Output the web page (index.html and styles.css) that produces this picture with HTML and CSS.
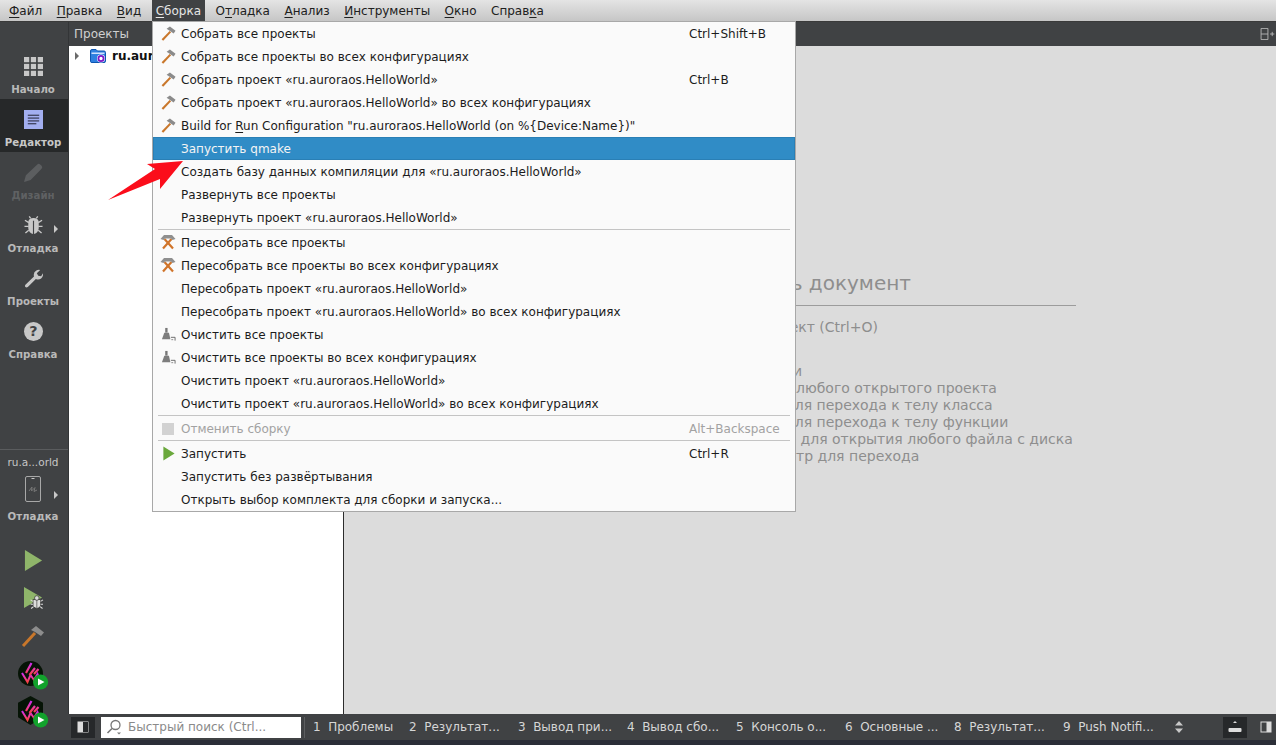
FILE: index.html
```html
<!DOCTYPE html>
<html lang="ru">
<head>
<meta charset="utf-8">
<title>Qt Creator</title>
<link rel="stylesheet" href="styles.css">
</head>
<body>
<svg class="defs" width="0" height="0" aria-hidden="true">
  <defs>
    <linearGradient id="wgrad" x1="0" y1="0" x2="0" y2="1">
      <stop offset="0" stop-color="#c92cf0"/>
      <stop offset="0.55" stop-color="#ee3a9a"/>
      <stop offset="1" stop-color="#f5413f"/>
    </linearGradient>
    <symbol id="hammer" viewBox="0 0 16 16">
      <path d="M1.5 15 L10 6" stroke="#c9772b" stroke-width="2.3" fill="none"/>
      <path d="M6 3 L9.5 0.5 L15.5 5 L13.5 8 L10 5.5 Z" fill="#8b8b8b"/>
    </symbol>
    <symbol id="rebuild" viewBox="0 0 16 16">
      <path d="M3 14.5 L11.5 5 M13 14.5 L4.5 5" stroke="#d0742a" stroke-width="2.2" fill="none"/>
      <path d="M0.5 5 L4 1 H12 L15.5 5 L12.5 6 L11 4.5 H5 L3.5 6 Z" fill="#8f8f8f"/>
    </symbol>
    <symbol id="broom" viewBox="0 0 16 16">
      <path d="M4.5 1 H7 V6 H4.5 Z" fill="#777"/>
      <path d="M3.5 6 H8.5 L10 13 H1 Z" fill="#7d7d7d"/>
      <path d="M10.5 11 H15 V14.5" stroke="#666" stroke-width="1" fill="none"/>
      <path d="M11 13.5 H13" stroke="#888" stroke-width="1" fill="none"/>
    </symbol>
    <symbol id="logo" viewBox="0 0 32 32">
      <path d="M4 12 L9.5 21 L12.5 14 L16 19 L19.5 13 L21 17" stroke="url(#wgrad)" stroke-width="2" fill="none"/>
      <path d="M8 12 L13.5 2 M11.5 14 L17 7 M16 13 L20.5 8" stroke="url(#wgrad)" stroke-width="2.2" fill="none"/>
      <circle cx="22.6" cy="21" r="7.6" fill="#12a22c"/>
      <path d="M20 17.5 L26.5 21 L20 24.5 Z" fill="#fff"/>
    </symbol>
  </defs>
</svg>

<nav class="menubar">
  <span class="mb-item"><u>Ф</u>айл</span>
  <span class="mb-item"><u>П</u>равка</span>
  <span class="mb-item"><u>В</u>ид</span>
  <span class="mb-item mb-active"><u>С</u>борка</span>
  <span class="mb-item">О<u>т</u>ладка</span>
  <span class="mb-item"><u>А</u>нализ</span>
  <span class="mb-item"><u>И</u>нструменты</span>
  <span class="mb-item"><u>О</u>кно</span>
  <span class="mb-item">Справ<u>к</u>а</span>
</nav>

<div class="main">
  <aside class="sidebar">
    <div class="side-top"></div>
    <div class="mode">
      <svg class="mode-icon" viewBox="0 0 20 20"><g fill="#c8c8c8"><rect x="0" y="0" width="5.5" height="5.5"/><rect x="7.2" y="0" width="5.5" height="5.5"/><rect x="14.5" y="0" width="5.5" height="5.5"/><rect x="0" y="7.2" width="5.5" height="5.5"/><rect x="7.2" y="7.2" width="5.5" height="5.5"/><rect x="14.5" y="7.2" width="5.5" height="5.5"/><rect x="0" y="14.5" width="5.5" height="5.5"/><rect x="7.2" y="14.5" width="5.5" height="5.5"/><rect x="14.5" y="14.5" width="5.5" height="5.5"/></g></svg>
      <span class="mode-label">Начало</span>
    </div>
    <div class="mode mode-active">
      <svg class="mode-icon" viewBox="0 0 20 20"><rect width="20" height="20" fill="#a3aff0"/><path d="M4 5.5H16M4 8.5H16M4 11.5H16M4 14.5H13" stroke="#1a1a2a" stroke-width="1"/></svg>
      <span class="mode-label mode-label-on">Редактор</span>
    </div>
    <div class="mode">
      <svg class="mode-icon" viewBox="0 0 20 20"><path d="M0 20 L2 13 L14 1.5 Q15.5 0 17 1.5 L18.5 3 Q20 4.5 18.5 6 L7 18 Z" fill="#5c5e60"/></svg>
      <span class="mode-label mode-label-off">Дизайн</span>
    </div>
    <div class="mode">
      <svg class="mode-icon" viewBox="0 0 20 20"><path d="M10 2 Q5 2 4.5 6 V13 Q5 18 9.4 19 V5 H10.6 V19 Q15 18 15.5 13 V6 Q15 2 10 2 Z" fill="#c8c8c8"/><path d="M5 7 L1 4.5 M5 11 H0.5 M5 15 L1.5 18 M15 7 L19 4.5 M15 11 H19.5 M15 15 L18.5 18 M7 2.5 L5.5 0.5 M13 2.5 L14.5 0.5" stroke="#c8c8c8" stroke-width="1.4" fill="none"/></svg>
      <span class="mode-label">Отладка</span>
      <span class="side-arrow"></span>
    </div>
    <div class="mode">
      <svg class="mode-icon" viewBox="0 0 20 20"><path d="M1.5 16.5 L10.5 8 Q9.5 3.5 13 1.5 Q15 0.5 17 1 L13.5 4.5 L15 7 L18 7.5 L20 4.5 Q20.5 8 18 10 Q15.5 12 12.5 10.5 L4 19 Q2.5 20 1.5 19 Q0.5 18 1.5 16.5 Z" fill="#c8c8c8"/></svg>
      <span class="mode-label">Проекты</span>
    </div>
    <div class="mode">
      <svg class="mode-icon" viewBox="0 0 20 20"><circle cx="10" cy="10" r="10" fill="#c8c8c8"/><text x="10" y="15" class="help-mark">?</text></svg>
      <span class="mode-label">Справка</span>
    </div>
    <div class="side-spacer"></div>
    <div class="target">
      <div class="target-name">ru.a...orld</div>
      <svg class="phone" viewBox="0 0 16 26"><rect x="0.5" y="0.5" width="15" height="25" rx="1.5" fill="none" stroke="#a8a8a8"/><path d="M6.5 2.5H9.5" stroke="#c8c8c8"/><path d="M4 15 L7 11 L6.5 15 L10 11.5 L9 15.5 L12 14" stroke="#777" fill="none"/></svg>
      <span class="side-arrow side-arrow-target"></span>
      <div class="mode-label target-label">Отладка</div>
    </div>
    <div class="actions">
      <svg class="act" viewBox="0 0 20 22"><path d="M1 0 L19 11 L1 22 Z" fill="#8fb56a"/></svg>
      <svg class="act act-debug" viewBox="0 0 20 24"><path d="M0 0 L19 11 L0 22 Z" fill="#8fb56a"/><path d="M9.5 13 H17.5 V20 Q13.5 25 9.5 20 Z" fill="#dcdcdc" stroke="#2f2f2f" stroke-width="0.8"/><path d="M13.5 13 V23" stroke="#555" stroke-width="0.8"/><circle cx="13.5" cy="11.5" r="2.4" fill="#dcdcdc" stroke="#2f2f2f" stroke-width="0.7"/><path d="M9.5 15 L7 13.5 M9.5 18 H7 M10 20.5 L7.5 22.5 M17.5 15 L20 13.5 M17.5 18 H20 M17 20.5 L19.5 22.5" stroke="#dcdcdc" stroke-width="1.1"/></svg>
      <svg class="act act-hammer" viewBox="0 0 24 24"><path d="M2 22 L14 9" stroke="#c9772b" stroke-width="3" fill="none"/><path d="M10 6 L15 2 L23 8.5 L20 12 L14 8 Z" fill="#8d8d8d"/></svg>
      <div class="logo-wrap"><span class="logo-bg logo-round"></span><svg class="logo" viewBox="0 0 32 32"><use href="#logo"/></svg></div>
      <div class="logo-wrap logo-wrap-hex"><svg class="logo-hex" viewBox="0 0 26 30"><path d="M13 0 L26 7 V22 L13 30 L0 22 V7 Z" fill="#061406"/></svg><svg class="logo" viewBox="0 0 32 32"><use href="#logo"/></svg></div>
    </div>
  </aside>

  <section class="projects">
    <header class="panel-head">Проекты</header>
    <div class="tree">
      <span class="tree-arrow"></span>
      <svg class="folder" viewBox="0 0 16 14"><path d="M0.5 2 Q0.5 0.5 2 0.5 H6 L7.5 2 H14 Q15.5 2 15.5 3.5 V12.5 Q15.5 13.5 14 13.5 H2 Q0.5 13.5 0.5 12.5 Z" fill="#2f80e0" stroke="#0d55b0"/><rect x="1.5" y="3.5" width="13" height="1.5" fill="#cfe3ff"/><circle cx="11" cy="9.5" r="4" fill="#fff"/><circle cx="11" cy="9.5" r="2.6" fill="none" stroke="#7a18c8" stroke-width="1.8"/></svg>
      <span class="tree-name">ru.auroraos.HelloWorld</span>
    </div>
  </section>

  <section class="editor">
    <header class="editor-head">
      <svg class="split" viewBox="0 0 16 14"><path d="M0.5 0.5H8.5V13.5H0.5Z M0.5 7H8.5 M11 7H16 M13.5 4.5V9.5" stroke="#bdbdbd" fill="none"/></svg>
    </header>
    <div class="doc">
      <div class="doc-block">
        <h2 class="doc-title">Открыть документ</h2>
        <ul class="doc-list">
          <li>• Файл &gt; Открыть файл или проект (Ctrl+O)</li>
          <li>• Файл &gt; Недавние файлы</li>
          <li class="doc-gap"><span class="pre pre-a">• Инструменты &gt; Найти (Ctrl+K)</span>и</li>
          <li><span class="pre pre-b">&nbsp;&nbsp;- ввести имя файла из</span>любого открытого проекта</li>
          <li><span class="pre pre-c">&nbsp;&nbsp;- ввести c &lt;шаблон&gt;</span>для перехода к телу класса</li>
          <li><span class="pre pre-c">&nbsp;&nbsp;- ввести m &lt;шаблон&gt;</span>для перехода к телу функции</li>
          <li><span class="pre pre-d">&nbsp;&nbsp;- ввести f &lt;имя файла&gt;</span>- для открытия любого файла с диска</li>
          <li><span class="pre pre-b">&nbsp;&nbsp;- ввести l &lt;номер строки&gt; и пара</span>тр для перехода</li>
        </ul>
      </div>
    </div>
  </section>
</div>

<footer class="statusbar">
  <span class="sb-btn sb-btn-left"><svg class="panel-ic" viewBox="0 0 12 12"><rect x="0.5" y="0.5" width="11" height="11" fill="#ddd"/><rect x="6" y="1" width="5" height="10" fill="#26282a"/></svg></span>
  <div class="search">
    <svg class="search-ic" viewBox="0 0 16 16"><circle cx="9.5" cy="6" r="4.5" fill="none" stroke="#777" stroke-width="1.3"/><path d="M6 9.5 L1.5 14" stroke="#777" stroke-width="1.6"/><path d="M11 13.5 H15 L13 15.5 Z" fill="#777"/></svg>
    <span>Быстрый поиск (Ctrl...</span>
  </div>
  <span class="sb-sep"></span>
  <span class="tab tab-first"><b>1</b>Проблемы</span>
  <span class="tab"><b>2</b>Результат...</span>
  <span class="tab"><b>3</b>Вывод при...</span>
  <span class="tab"><b>4</b>Вывод сбо...</span>
  <span class="tab"><b>5</b>Консоль о...</span>
  <span class="tab"><b>6</b>Основные ...</span>
  <span class="tab"><b>8</b>Результат...</span>
  <span class="tab tab-last"><b>9</b>Push Notifi...</span>
  <svg class="updown" viewBox="0 0 8 12"><path d="M4 0 L8 4.5 H0 Z M4 12 L0 7.5 H8 Z" fill="#c8c8c8"/></svg>
  <span class="sb-btn sb-btn-right"><svg class="output-ic" viewBox="0 0 14 12"><rect x="0.5" y="7" width="13" height="4" rx="1" fill="#ddd"/><path d="M7 0 L9 2 H5 Z" fill="#ddd"/></svg></span>
  <svg class="panel-ic panel-ic-right" viewBox="0 0 12 12"><rect x="0.5" y="0.5" width="11" height="11" fill="#ddd"/><rect x="1.5" y="1.5" width="5" height="9" fill="#404244"/></svg>
</footer>
<div class="taskbar"></div>

<div class="menu">
  <div class="mi"><svg class="mi-ic"><use href="#hammer"/></svg><span class="mi-t">Собрать все проекты</span><span class="mi-k">Ctrl+Shift+B</span></div>
  <div class="mi"><svg class="mi-ic"><use href="#hammer"/></svg><span class="mi-t">Собрать все проекты во всех конфигурациях</span></div>
  <div class="mi"><svg class="mi-ic"><use href="#hammer"/></svg><span class="mi-t">Собрать проект «ru.auroraos.HelloWorld»</span><span class="mi-k">Ctrl+B</span></div>
  <div class="mi"><svg class="mi-ic"><use href="#hammer"/></svg><span class="mi-t">Собрать проект «ru.auroraos.HelloWorld» во всех конфигурациях</span></div>
  <div class="mi"><svg class="mi-ic"><use href="#hammer"/></svg><span class="mi-t">Build for <u>R</u>un Configuration "ru.auroraos.HelloWorld (on %{Device:Name})"</span></div>
  <div class="mi mi-hi"><span class="mi-t">Запустить qmake</span></div>
  <div class="mi"><span class="mi-t">Создать базу данных компиляции для «ru.auroraos.HelloWorld»</span></div>
  <div class="mi"><span class="mi-t">Развернуть все проекты</span></div>
  <div class="mi"><span class="mi-t">Развернуть проект «ru.auroraos.HelloWorld»</span></div>
  <div class="msep"></div>
  <div class="mi"><svg class="mi-ic mi-ic-wide"><use href="#rebuild"/></svg><span class="mi-t">Пересобрать все проекты</span></div>
  <div class="mi"><svg class="mi-ic mi-ic-wide"><use href="#rebuild"/></svg><span class="mi-t">Пересобрать все проекты во всех конфигурациях</span></div>
  <div class="mi"><span class="mi-t">Пересобрать проект «ru.auroraos.HelloWorld»</span></div>
  <div class="mi"><span class="mi-t">Пересобрать проект «ru.auroraos.HelloWorld» во всех конфигурациях</span></div>
  <div class="mi"><svg class="mi-ic"><use href="#broom"/></svg><span class="mi-t">Очистить все проекты</span></div>
  <div class="mi"><svg class="mi-ic"><use href="#broom"/></svg><span class="mi-t">Очистить все проекты во всех конфигурациях</span></div>
  <div class="mi"><span class="mi-t">Очистить проект «ru.auroraos.HelloWorld»</span></div>
  <div class="mi"><span class="mi-t">Очистить проект «ru.auroraos.HelloWorld» во всех конфигурациях</span></div>
  <div class="msep"></div>
  <div class="mi mi-off"><span class="stop-ic"></span><span class="mi-t">Отменить сборку</span><span class="mi-k">Alt+Backspace</span></div>
  <div class="msep"></div>
  <div class="mi"><svg class="mi-ic" viewBox="0 0 16 16"><path d="M2.5 0.5 L14.5 8 L2.5 15.5 Z" fill="#6aa83c"/></svg><span class="mi-t">Запустить</span><span class="mi-k">Ctrl+R</span></div>
  <div class="mi"><span class="mi-t">Запустить без развёртывания</span></div>
  <div class="mi"><span class="mi-t">Открыть выбор комплекта для сборки и запуска...</span></div>
</div>

<svg class="pointer" viewBox="0 0 80 44"><path d="M75 1 L39 4 L47 9 L0 40 L52 19 L52 29 Z" fill="#fb0d1b"/></svg>
</body>
</html>
```

FILE: styles.css
```css
* { box-sizing: border-box; }
html, body { margin: 0; padding: 0; height: 100%; }
body {
  position: relative;
  width: 1276px;
  height: 745px;
  overflow: hidden;
  display: flex;
  flex-direction: column;
  font-family: "DejaVu Sans", sans-serif;
  font-size: 12px;
  color: #1a1a1a;
  background: #404244;
}
.defs { position: absolute; }
u { text-underline-offset: 2px; text-decoration-thickness: 1px; }

/* menu bar */
.menubar {
  flex: none;
  height: 22px;
  display: flex;
  gap: 6.5px;
  padding-left: 5px;
  background: linear-gradient(#e4e4e4, #c6c6c6);
  border-bottom: 1px solid #3a3a3a;
}
.mb-item { padding: 0 4px; line-height: 23px; white-space: nowrap; color: #202020; }
.mb-active { background: #404244; color: #e6e6e6; height: 21px; }

/* workspace */
.main { flex: 1; display: flex; min-height: 0; }

.sidebar {
  flex: none;
  width: 69px;
  display: flex;
  flex-direction: column;
  align-items: stretch;
  background: #404244;
  border-right: 1px solid #333537;
}
.side-top { flex: none; height: 24px; }
.mode {
  flex: none;
  position: relative;
  height: 53px;
  display: flex;
  flex-direction: column;
  align-items: center;
  padding: 11px 2px 0 0;
}
.mode-active { background: #262829; }
.mode-icon { width: 19px; height: 19px; display: block; flex: none; }
.mode-label {
  margin-top: 7px;
  font-size: 10.2px;
  font-weight: 700;
  line-height: 13px;
  color: #b9b9b9;
  white-space: nowrap;
}
.mode-label-on { color: #c8c8c8; }
.mode-label-off { color: #5f6163; }
.help-mark { font: 700 15px "DejaVu Sans", sans-serif; fill: #404244; text-anchor: middle; }
.side-arrow {
  position: absolute;
  right: 10px;
  top: 20px;
  border-left: 4px solid #c8c8c8;
  border-top: 4px solid transparent;
  border-bottom: 4px solid transparent;
}
.side-arrow-target { top: 41px; }
.side-spacer { flex: 1; }
.target {
  flex: none;
  position: relative;
  height: 85px;
  border-top: 1px solid #5a5c5e;
  display: flex;
  flex-direction: column;
  align-items: center;
  padding: 6px 2px 0 0;
}
.target-name { font-size: 10.5px; line-height: 13px; color: #c6c6c6; white-space: nowrap; }
.phone { width: 16px; height: 26px; margin-top: 7px; flex: none; }
.target-label { margin-top: 8px; }
.actions {
  flex: none;
  height: 180px;
  display: flex;
  flex-direction: column;
  align-items: center;
  padding: 15px 2px 0 0;
}
.act { width: 19px; height: 23px; flex: none; margin-bottom: 15px; overflow: visible; }
.act-hammer { width: 24px; height: 24px; margin-top: -1px; margin-bottom: 13px; }
.logo-wrap { position: relative; width: 32px; height: 32px; flex: none; margin-bottom: 3px; margin-left: 2px; }
.logo-wrap-hex { margin-top: 0; }
.logo-bg { position: absolute; left: 0; top: 0; width: 25px; height: 25px; border-radius: 50%; background: #061406; }
.logo-hex { position: absolute; left: 0; top: 0; width: 25px; height: 29px; }
.logo { position: absolute; left: 0; top: 0; width: 32px; height: 32px; }
.logo-wrap-hex .logo { top: 3px; }

.projects {
  flex: none;
  width: 275px;
  display: flex;
  flex-direction: column;
  background: #fff;
  border-right: 1px solid #2c2c2c;
}
.panel-head {
  flex: none;
  height: 24px;
  padding-left: 5px;
  line-height: 24px;
  background: #404244;
  color: #d0d0d0;
}
.tree { display: flex; align-items: center; height: 19px; padding-left: 6px; }
.tree-arrow {
  border-left: 4px solid #6a6a6a;
  border-top: 4px solid transparent;
  border-bottom: 4px solid transparent;
  margin-right: 11px;
}
.folder { width: 16px; height: 14px; margin-right: 6px; flex: none; }
.tree-name { font-weight: 700; font-size: 12px; color: #111; white-space: nowrap; }

.editor { flex: 1; display: flex; flex-direction: column; min-width: 0; }
.editor-head {
  flex: none;
  height: 24px;
  display: flex;
  justify-content: flex-end;
  align-items: center;
  padding-right: 1px;
  background: #404244;
}
.split { width: 15px; height: 12px; }
.doc { flex: 1; background: #dcdcdc; padding: 226px 0 0 202px; overflow: hidden; }
.doc-block { width: 530px; color: #8e8e8e; }
.doc-title {
  margin: 0;
  height: 34px;
  line-height: 22px;
  font-size: 20px;
  font-weight: 400;
  text-align: center;
  border-bottom: 1px solid #9c9c9c;
}
.doc-list { list-style: none; margin: 13px 0 0; padding: 0 0 0 2px; font-size: 14px; line-height: 17px; white-space: nowrap; }
.doc-gap { margin-top: 10px; }
.pre { display: inline-block; vertical-align: top; height: 17px; overflow: hidden; }
.pre-a { width: 245px; }
.pre-b { width: 248px; }
.pre-c { width: 237px; }
.pre-d { width: 243px; }

/* status bar */
.statusbar {
  flex: none;
  height: 26px;
  display: flex;
  align-items: center;
  padding-left: 71px;
  background: #404244;
  color: #d6d6d6;
}
.sb-btn {
  flex: none;
  width: 24px;
  height: 21px;
  display: flex;
  align-items: center;
  justify-content: center;
  background: #26282a;
}
.panel-ic { width: 12px; height: 12px; }
.panel-ic-right { margin-left: 13px; flex: none; }
.output-ic { width: 14px; height: 12px; }
.search {
  flex: none;
  width: 200px;
  height: 21px;
  margin-left: 6px;
  display: flex;
  align-items: center;
  padding-left: 5px;
  background: #fff;
  color: #8a8a8a;
  white-space: nowrap;
}
.search-ic { width: 16px; height: 16px; margin-right: 6px; flex: none; }
.sb-sep { flex: none; width: 1px; height: 21px; margin: 0 8px 0 3px; background: #5c5e60; }
.tab { flex: none; width: 109px; white-space: nowrap; }
.tab b { font-weight: 400; margin-right: 7.5px; }
.tab-first { width: 96px; }
.tab-last { width: 112px; }
.updown { width: 8px; height: 12px; flex: none; }
.sb-btn-right { margin-left: 40px; }

.taskbar { flex: none; height: 5px; background: #2b2e38; }

/* open menu */
.menu {
  position: absolute;
  left: 152px;
  top: 21px;
  width: 644px;
  height: 491px;
  background: #fafafa;
  border: 1px solid #a8a8a8;
}
.mi {
  position: relative;
  height: 23px;
  display: flex;
  align-items: center;
  justify-content: space-between;
  padding: 0 15px 0 28px;
  color: #1c1c1c;
  white-space: nowrap;
}
.mi-hi { background: #308cc6; color: #f4f4f4; border: 1px solid #2a7fb5; padding-left: 27px; padding-right: 14px; }
.mi-off { color: #a2a2a2; }
.mi-ic { position: absolute; left: 8px; top: 4px; width: 15px; height: 15px; }
.mi-ic-wide { left: 7px; width: 16px; height: 16px; top: 3px; }
.stop-ic { position: absolute; left: 9px; top: 6px; width: 12px; height: 12px; background: #d2d2d2; }
.mi-k { width: 91px; flex: none; }
.msep { height: 2px; margin: 0 5px; border-top: 1px solid #c4c4c4; }

.pointer { position: absolute; left: 108px; top: 160px; width: 80px; height: 44px; }
```
